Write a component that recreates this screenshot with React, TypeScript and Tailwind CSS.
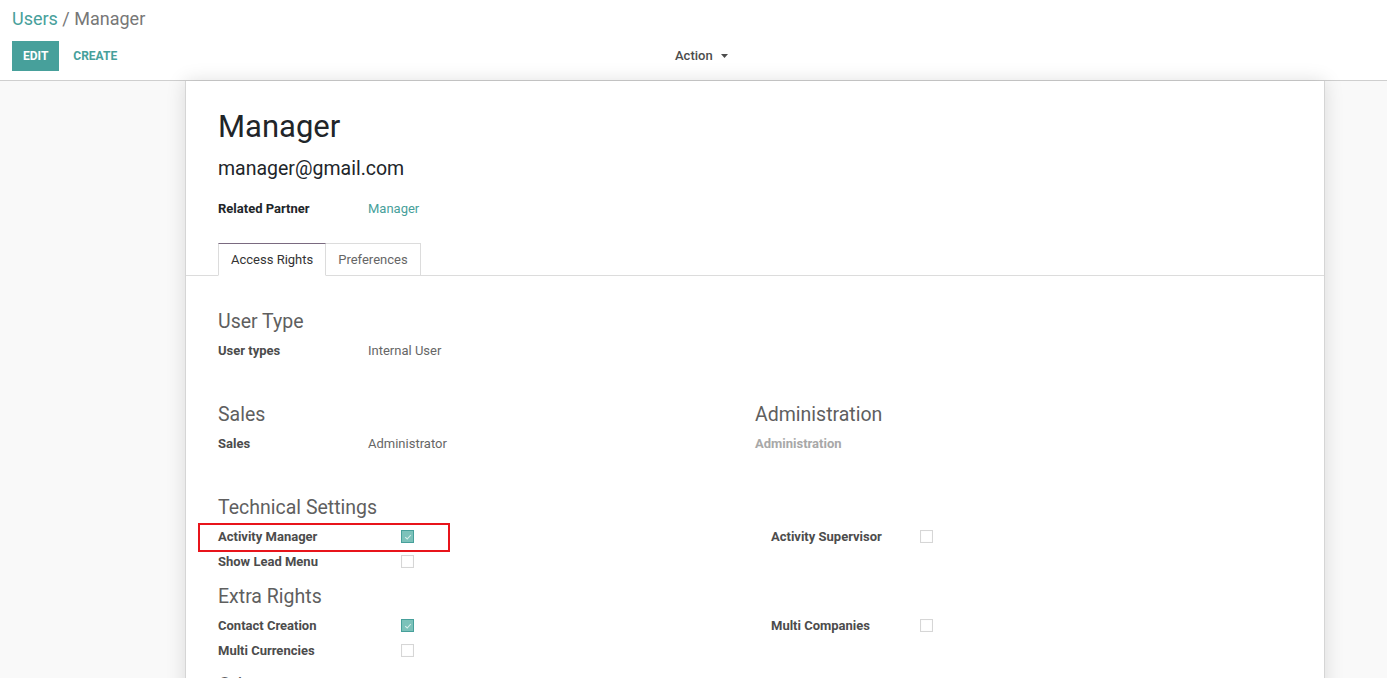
import React from "react";

const TEAL = "#47a09b";

function Check({ checked }: { checked: boolean }) {
  if (checked) {
    return (
      <span className="inline-flex h-[13px] w-[13px] items-center justify-center border border-[#47a09b] bg-[#7cc2ba]">
        <svg width="8" height="8" viewBox="0 0 8 8">
          <path d="M1.2 4.2 L3.2 6 L6.8 2" fill="none" stroke="#d8eeeb" strokeWidth="1.1" />
        </svg>
      </span>
    );
  }
  return <span className="inline-block h-[13px] w-[13px] border border-[#d6d6d6] bg-white shadow-[inset_0_0_1px_rgba(0,0,0,0.08)]" />;
}

function Heading({ children }: { children: React.ReactNode }) {
  return <div className="mb-[2px] h-[28px] text-[19.5px] leading-[28px] text-[#5f5f5f]">{children}</div>;
}

function FieldRow({ label, value, muted }: { label: string; value?: string; muted?: boolean }) {
  return (
    <div className="flex h-[25px] items-center text-[13px]">
      <div className={`w-[150px] font-bold ${muted ? "text-[#a8a8a8]" : "text-[#4c4c4c]"}`}>{label}</div>
      {value && <div className="text-[#666666]">{value}</div>}
    </div>
  );
}

function BoolRow({ label, checked, labelW, boxed }: { label: string; checked: boolean; labelW: string; boxed?: boolean }) {
  return (
    <div className="relative flex h-[25px] items-center text-[13px]">
      <div className={`${labelW} font-bold text-[#4c4c4c]`}>{label}</div>
      <Check checked={checked} />
      {boxed && <div className="absolute left-[-20px] top-[-1px] h-[29px] w-[252px] border-2 border-[#e8141b]" />}
    </div>
  );
}

export default function App() {
  return (
    <div className="min-h-[678px] w-[1387px] overflow-hidden bg-[#f9f9f9] font-['Roboto',sans-serif]">
      {/* Control panel */}
      <div className="border-b border-[#cfcfcf] bg-white px-[12px] pb-[9px] pt-[7px]">
        <div className="text-[18px] leading-[24px]">
          <span style={{ color: TEAL }}>Users</span>
          <span className="text-[#777777]"> / Manager</span>
        </div>
        <div className="mt-[10px] flex h-[30px] items-center">
          <div className="flex w-[651px] items-center">
            <button className="h-[30px] bg-[#47a09b] px-[11px] text-[12px] font-bold uppercase text-white">Edit</button>
            <button className="ml-[3px] h-[30px] px-[11px] text-[12px] font-bold uppercase text-[#47a09b]">Create</button>
          </div>
          <button className="flex items-center px-[12px] text-[13px] font-medium text-[#4c4c4c]">
            Action
            <svg className="ml-[8px]" width="7" height="4" viewBox="0 0 7 4">
              <path d="M0 0 H7 L3.5 4 Z" fill="#4c4c4c" />
            </svg>
          </button>
        </div>
      </div>

      {/* Sheet */}
      <div className="ml-[185px] min-h-[600px] w-[1140px] border-x border-[#d5d5d5] bg-white shadow-[0_0_18px_rgba(0,0,0,0.13)]">
        <div className="px-[32px] pt-[27px]">
          <div className="text-[31px] leading-[37px] text-[#212529]">Manager</div>
          <div className="mt-[12px] text-[19.5px] leading-[24px] text-[#212529]">manager@gmail.com</div>
          <div className="mt-[18px] flex h-[20px] items-center text-[13px]">
            <div className="w-[150px] font-bold text-[#212529]">Related Partner</div>
            <div style={{ color: TEAL }}>Manager</div>
          </div>
        </div>

        {/* Tabs */}
        <div className="mt-[24px] flex border-b border-[#dcdcdc] px-[32px]">
          <div className="-mb-px flex h-[33px] items-center border border-b-white border-[#dcdcdc] border-t-[#7a6a80] bg-white px-[12px] text-[13px] text-[#333333]">
            Access Rights
          </div>
          <div className="-mb-px flex h-[33px] items-center border border-l-0 border-b-0 border-[#dcdcdc] px-[12px] text-[13px] text-[#666666]">
            Preferences
          </div>
        </div>

        <div className="px-[32px] pt-[32px]">
          {/* User Type */}
          <Heading>User Type</Heading>
          <FieldRow label="User types" value="Internal User" />

          {/* Sales / Administration */}
          <div className="mt-[38px] grid grid-cols-2">
            <div>
              <Heading>Sales</Heading>
              <FieldRow label="Sales" value="Administrator" />
            </div>
            <div>
              <Heading>Administration</Heading>
              <FieldRow label="Administration" muted />
            </div>
          </div>

          {/* Technical Settings */}
          <div className="mt-[38px]">
            <Heading>Technical Settings</Heading>
            <div className="grid grid-cols-2">
              <div>
                <BoolRow label="Activity Manager" checked labelW="w-[183px]" boxed />
                <BoolRow label="Show Lead Menu" checked={false} labelW="w-[183px]" />
              </div>
              <div className="pl-[16px]">
                <BoolRow label="Activity Supervisor" checked={false} labelW="w-[149px]" />
              </div>
            </div>
          </div>

          {/* Extra Rights */}
          <div className="mt-[9px]">
            <Heading>Extra Rights</Heading>
            <div className="grid grid-cols-2">
              <div>
                <BoolRow label="Contact Creation" checked labelW="w-[183px]" />
                <BoolRow label="Multi Currencies" checked={false} labelW="w-[183px]" />
              </div>
              <div className="pl-[16px]">
                <BoolRow label="Multi Companies" checked={false} labelW="w-[149px]" />
              </div>
            </div>
          </div>

          <div className="mt-[9px]">
            <Heading>Other</Heading>
          </div>
        </div>
      </div>
    </div>
  );
}
